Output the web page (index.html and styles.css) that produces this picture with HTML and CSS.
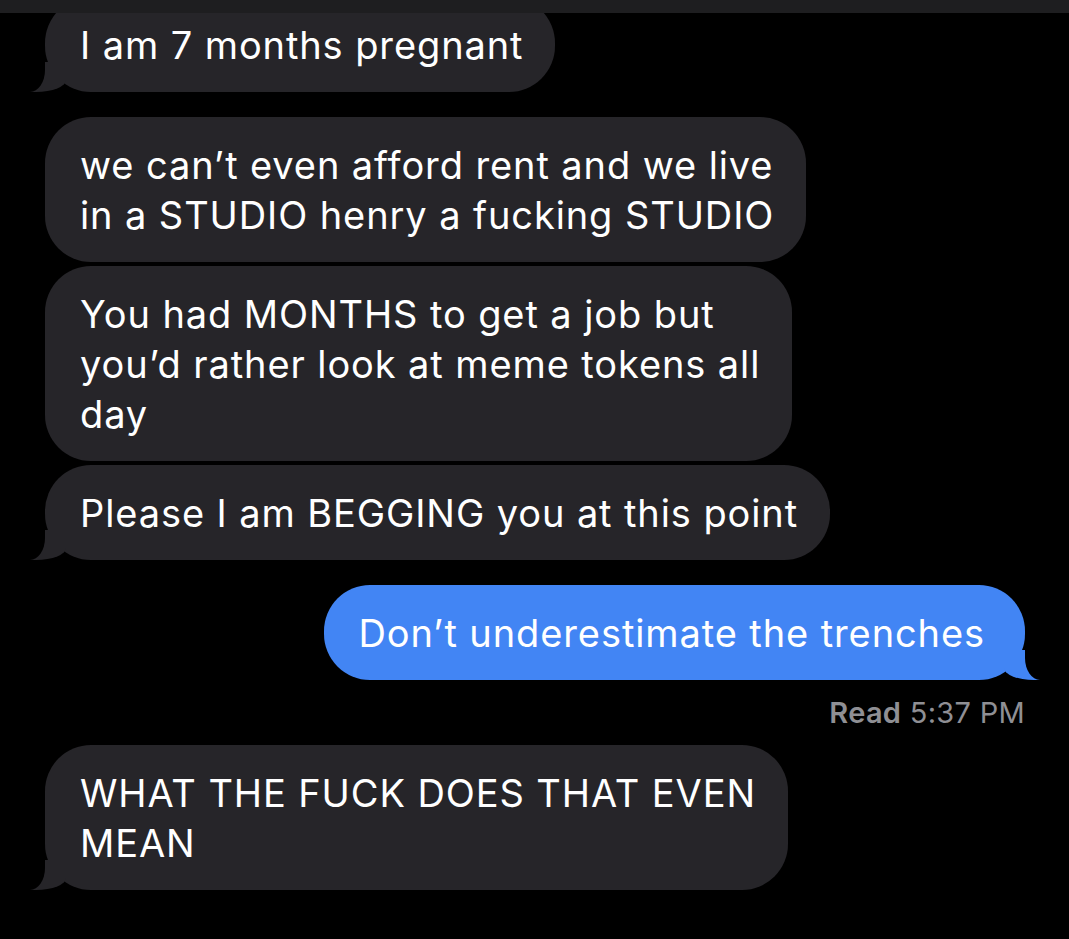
FILE: index.html
```html
<!DOCTYPE html>
<html lang="en">
<head>
<meta charset="utf-8">
<title>Messages</title>
<link rel="stylesheet" href="styles.css">
</head>
<body>
<div class="topbar"></div>
<main class="thread">
  <div class="group">
    <div class="bubble in tail">I am 7 months pregnant</div>
  </div>
  <div class="group">
    <div class="bubble in">we can’t even afford rent and we live<br>in a STUDIO henry a fucking STUDIO</div>
    <div class="bubble in">You had MONTHS to get a job but<br>you’d rather look at meme tokens all<br>day</div>
    <div class="bubble in tail">Please I am BEGGING you at this point</div>
  </div>
  <div class="group sent-group">
    <div class="bubble out tail">Don’t underestimate the trenches</div>
    <div class="receipt"><b>Read</b> 5:37 PM</div>
  </div>
  <div class="group last">
    <div class="bubble in tail">WHAT THE FUCK DOES THAT EVEN<br>MEAN</div>
  </div>
</main>
</body>
</html>
```

FILE: styles.css
```css
html, body {
  margin: 0;
  padding: 0;
  background: #000;
}
body {
  width: 1069px;
  height: 939px;
  overflow: hidden;
  font-family: Inter, "Liberation Sans", Arial, sans-serif;
  color: #fff;
}
.topbar {
  position: relative;
  z-index: 2;
  height: 13px;
  background: #1e1e20;
}
.thread {
  display: flex;
  flex-direction: column;
  gap: 25px;
  margin-top: -16px;
  padding: 0 44px 0 45px;
}
.group {
  display: flex;
  flex-direction: column;
  align-items: flex-start;
  gap: 4px;
}
.sent-group {
  align-items: flex-end;
  gap: 17px;
}
.group.last {
  margin-top: -9px;
}
.bubble {
  position: relative;
  font-size: 38px;
  letter-spacing: 0.9px;
  line-height: 50px;
  padding: 22.5px 32px 22.5px 35px;
  border-radius: 46px;
  white-space: nowrap;
}
.bubble.in {
  background: #262529;
}
.bubble.out {
  background: #4285f4;
  padding-left: 34px;
  padding-right: 40px;
}
.bubble.tail.in::before {
  content: "";
  position: absolute;
  left: -15px;
  bottom: 0;
  width: 36px;
  height: 30px;
  background: #262529;
  border-bottom-right-radius: 30px 12px;
}
.bubble.tail.in::after {
  content: "";
  position: absolute;
  left: -30px;
  bottom: 0;
  width: 30px;
  height: 32px;
  background: #000;
  border-bottom-right-radius: 15px 22px;
}
.bubble.tail.out::before {
  content: "";
  position: absolute;
  right: -15px;
  bottom: 0;
  width: 36px;
  height: 30px;
  background: #4285f4;
  border-bottom-left-radius: 30px 12px;
}
.bubble.tail.out::after {
  content: "";
  position: absolute;
  right: -30px;
  bottom: 0;
  width: 30px;
  height: 32px;
  background: #000;
  border-bottom-left-radius: 15px 22px;
}
.receipt {
  font-size: 29px;
  letter-spacing: 0.3px;
  line-height: 32px;
  color: #8f8f94;
}
.receipt b {
  font-weight: 600;
}
```
